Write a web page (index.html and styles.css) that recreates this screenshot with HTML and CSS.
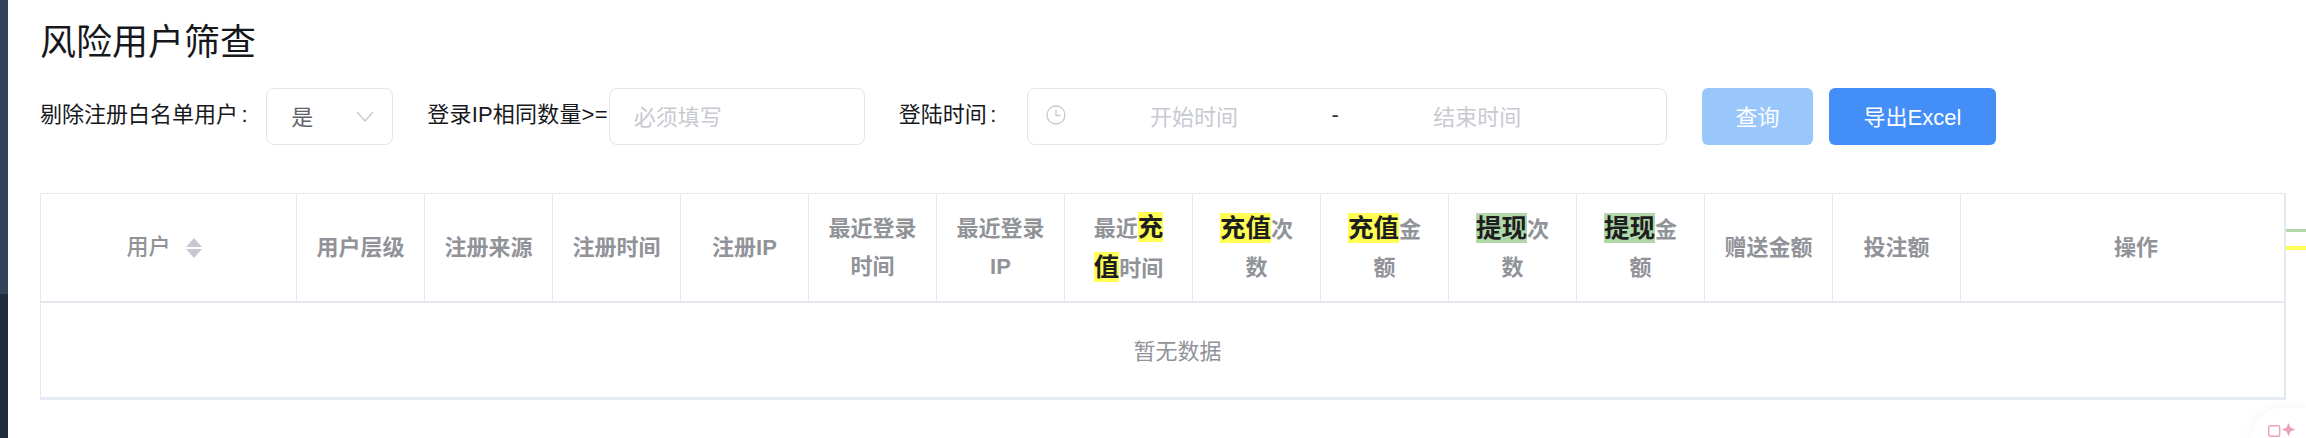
FILE: index.html
```html
<!DOCTYPE html>
<html lang="zh-CN">
<head>
<meta charset="utf-8">
<title>风险用户筛查</title>
<link rel="stylesheet" href="styles.css">
</head>
<body>
<div class="app">
  <aside class="sidebar"></aside>
  <main class="main">
    <h1 class="title">风险用户筛查</h1>
    <form class="filters">
      <label class="label">剔除注册白名单用户 :</label>
      <div class="field select">
        <span class="value">是</span>
        <svg class="chevron" viewBox="0 0 18 11" width="18" height="11"><path d="M1 1l8 9 8-9" fill="none" stroke="#c6c9d1" stroke-width="1.3"/></svg>
      </div>
      <label class="label label-ip">登录IP相同数量&gt;=</label>
      <div class="field input"><span class="placeholder">必须填写</span></div>
      <label class="label label-time">登陆时间 :</label>
      <div class="field range">
        <svg class="clock" viewBox="0 0 20 20" width="20" height="20"><circle cx="10" cy="10" r="9" fill="none" stroke="#c6c9d1" stroke-width="1.3"/><path d="M10 4.5V10.500H14.500" fill="none" stroke="#c6c9d1" stroke-width="1.3"/></svg>
        <span class="placeholder range-part">开始时间</span>
        <span class="range-sep">-</span>
        <span class="placeholder range-part">结束时间</span>
      </div>
      <button type="button" class="btn btn-disabled">查询</button>
      <button type="button" class="btn btn-primary">导出Excel</button>
    </form>
    <div class="table">
      <div class="thead">
        <div class="th th-user">
          <span class="th-user-text">用户</span>
          <span class="sort"><i class="up"></i><i class="down"></i></span>
        </div>
        <div class="th">用户层级</div>
        <div class="th">注册来源</div>
        <div class="th">注册时间</div>
        <div class="th">注册IP</div>
        <div class="th">最近登录时间</div>
        <div class="th">最近登录IP</div>
        <div class="th"><span>最近<b class="hl-y">充值</b>时间</span></div>
        <div class="th"><span><b class="hl-y">充值</b>次数</span></div>
        <div class="th"><span><b class="hl-y">充值</b>金额</span></div>
        <div class="th"><span><b class="hl-g">提现</b>次数</span></div>
        <div class="th"><span><b class="hl-g">提现</b>金额</span></div>
        <div class="th">赠送金额</div>
        <div class="th">投注额</div>
        <div class="th th-last">操作</div>
      </div>
      <div class="tbody"><span>暂无数据</span></div>
    </div>
  </main>
</div>
<div class="tick tick-g"></div>
<div class="tick tick-y"></div>
<div class="fab">
  <svg viewBox="0 0 28 14" width="28" height="14"><rect x="0.700" y="2.700" width="11" height="10.600" rx="1.500" fill="none" stroke="#e9a3b6" stroke-width="1.400"/><path d="M20.500 0l2 4.500 4.800 2-4.800 2-2 5-2-5-4.800-2 4.800-2z" fill="#e9a3b6"/></svg>
</div>
</body>
</html>
```
FILE: styles.css
```css
* { box-sizing: border-box; }
html, body { margin: 0; padding: 0; height: 100%; background: #fff; overflow: hidden; }
body { font-family: "Liberation Sans", "Noto Sans CJK SC", sans-serif; color: #17181c; }
.app { display: flex; height: 438px; }
.sidebar { width: 8px; flex: none; background: linear-gradient(#33435a 0, #33435a 294px, #1f2d3d 294px, #1f2d3d 100%); }
.main { flex: 1; padding-left: 32px; min-width: 0; }
.title { margin: 0; padding-top: 18px; font-size: 36px; line-height: 50px; font-weight: 400; height: 88px; }
.filters { display: flex; align-items: center; height: 57px; font-size: 22px; }
.label { white-space: nowrap; line-height: 30px; padding-bottom: 4px; word-spacing: -2.500px; }
.label-ip { margin-left: 34px; letter-spacing: .2px; }
.label-time { margin-left: 34px; }
.field { height: 57px; border: 1.5px solid #e3e5ec; border-radius: 8px; display: flex; align-items: center; background: #fff; padding-bottom: 4px; }
.select { width: 127px; margin-left: 18.500px; padding-left: 24px; justify-content: space-between; padding-right: 18px; color: #5f6269; }
.chevron { margin-top: 4px; }
.input { width: 256px; margin-left: 1px; padding-left: 24px; }
.range { width: 640px; margin-left: 30.500px; padding-left: 18px; }
.placeholder { color: #c8cad1; }
.range-part { width: 88px; flex: none; }
.clock + .range-part { margin-left: 84px; }
.range-sep { margin-left: 93.500px; margin-right: 94.500px; color: #303133; }
.clock { flex: none; }
.btn { height: 57px; border: none; border-radius: 6px; font: inherit; color: #fff; padding: 0 0 4px; }
.btn-disabled { width: 111px; margin-left: 35px; background: #9ac7fb; }
.btn-primary { width: 167px; margin-left: 16px; background: #448ef7; }
.table { margin-top: 48px; width: 2246px; border: 1.5px solid #e6e8f0; border-bottom: 3px solid #e6ebf5; border-right-width: 2px; height: 207px; }
.thead { display: grid; grid-template-columns: 256px repeat(13, 128px) 1fr; height: 109px; border-bottom: 2px solid #e6e8f0; }
.th { display: flex; align-items: center; justify-content: center; text-align: center; padding: 0 17px; font-size: 22px; line-height: 38px; font-weight: 600; color: #919399; border-right: 1.5px solid #e6e8f0; }
.th-last { border-right: none; padding-left: 44px; }
.th-user { gap: 15px; font-weight: 500; padding-right: 26px; }
.th-user-text { position: relative; top: -1px; }
.sort { display: flex; flex-direction: column; gap: 2px; }
.sort i { display: block; width: 0; height: 0; border-left: 8px solid transparent; border-right: 8px solid transparent; }
.sort .up { border-bottom: 9px solid #c6c9d1; }
.sort .down { border-top: 9px solid #c6c9d1; }
.hl-y, .hl-g { font-weight: 700; font-size: 25.500px; color: #1d1e20; padding: 1px 0; }
.hl-y { background: #ffff55; }
.hl-g { background: #b0d8a8; }
.tbody { height: 93px; display: flex; align-items: center; justify-content: center; padding: 0 0 1px 30px; color: #919399; font-size: 22px; }
.tick { position: absolute; left: 2286px; width: 20px; }
.tick-g { top: 229px; height: 3px; background: #b0d8a8; }
.tick-y { top: 246px; height: 4px; background: #ffff55; }
.fab { position: absolute; left: 2252px; top: 408px; width: 54px; height: 30px; border-radius: 40px 0 0 0; background: #fff; box-shadow: 0 0 14px rgba(0,0,0,.05); padding: 15px 0 0 16px; }
.fab svg { display: block; }
```
